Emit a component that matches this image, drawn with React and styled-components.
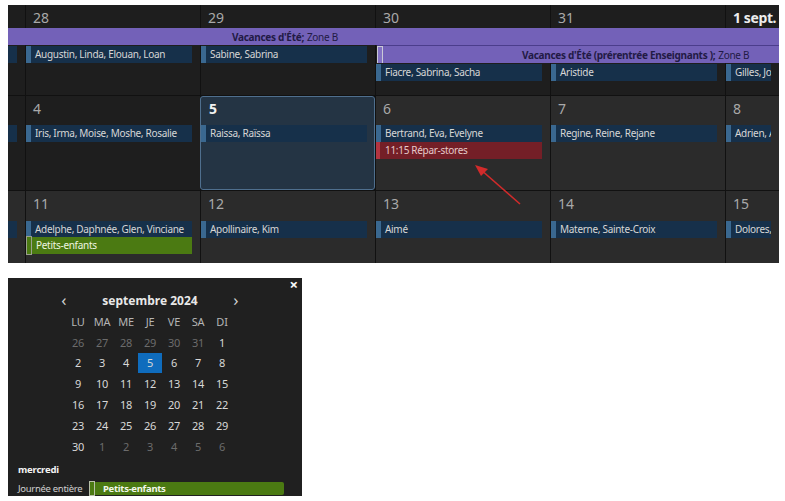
import React from "react";
import styled, { createGlobalStyle } from "styled-components";

const GlobalStyle = createGlobalStyle`
  body {
    margin: 0;
    background: #ffffff;
    font-family: "Noto Sans", "Open Sans", sans-serif;
  }
`;

const Page = styled.div`
  display: flex;
  flex-direction: column;
  align-items: flex-start;
  padding: 5px 0 0 8px;
`;

const Calendar = styled.div`
  position: relative;
  width: 771px;
  display: flex;
  flex-direction: column;
  background: #111;
`;

const Week = styled.div`
  display: grid;
  grid-template-columns: 17px repeat(4, 175px) 54px;
  grid-template-rows: ${(p) => p.$rows};
  height: ${(p) => p.$height}px;
  border-bottom: ${(p) => (p.$last ? "none" : "1px solid #111")};
  overflow: hidden;
`;

const Day = styled.div`
  grid-row: 1 / -1;
  grid-column: ${(p) => p.$col};
  background: ${(p) => (p.$past ? "#1e1e1e" : "#2b2b2b")};
  border-left: ${(p) => (p.$col === 1 ? "none" : "1px solid #111")};
  padding: ${(p) => p.$pad || "4px 0 0 7px"};
  font-size: 14px;
  letter-spacing: ${(p) => (p.$bold ? "-0.4px" : "0")};
  color: ${(p) => (p.$bold ? "#ececec" : "#a9a9a9")};
  font-weight: ${(p) => (p.$bold ? 700 : 400)};
  white-space: nowrap;
  overflow: hidden;
  line-height: 18px;
`;

const SelectedDay = styled(Day)`
  background: #243444;
  border: 1px solid #4f6f8e;
  border-radius: 3px;
  color: #f2f2f2;
  font-weight: 700;
`;

const Names = styled.div`
  grid-row: ${(p) => p.$row};
  grid-column: ${(p) => p.$col};
  margin: 1px 8px 0 ${(p) => (p.$cut ? 0 : 1)}px;
  background: #16304a;
  border-left: 5px solid ${(p) => (p.$cut ? "#16304a" : "#3a6890")};
  color: #d6d6d6;
  font-size: 10px;
  letter-spacing: -0.3px;
  line-height: 17px;
  height: 17px;
  padding-left: 4px;
  white-space: nowrap;
  overflow: hidden;
`;

const TimedEvent = styled.div`
  grid-row: ${(p) => p.$row};
  grid-column: ${(p) => p.$col};
  margin: 1px 8px 0 1px;
  background: #741f27;
  border-left: 4px solid #b23440;
  color: #e6caca;
  font-size: 10px;
  letter-spacing: -0.3px;
  line-height: 17px;
  height: 17px;
  padding-left: 5px;
  white-space: nowrap;
`;

const GreenEvent = styled.div`
  grid-row: ${(p) => p.$row};
  grid-column: ${(p) => p.$col};
  margin: 0 8px 0 1px;
  background: #4b7a12;
  color: #eef5e0;
  font-size: 10px;
  letter-spacing: -0.3px;
  line-height: 17px;
  height: 17px;
  display: flex;
  align-items: center;
  gap: 4px;
  white-space: nowrap;
`;

const Marker = styled.span`
  flex: none;
  width: 4px;
  height: ${(p) => p.$h || 15}px;
  border: 1px solid ${(p) => p.$color || "#9aa08e"};
  background: ${(p) => p.$fill || "transparent"};
`;

const Holiday = styled.div`
  grid-row: ${(p) => p.$row};
  grid-column: ${(p) => p.$col};
  margin-left: ${(p) => p.$ml || 0}px;
  background: #7361b8;
  border-top: ${(p) => (p.$top ? "1px solid #4b3d8c" : "none")};
  color: #221a45;
  font-size: 10px;
  letter-spacing: -0.3px;
  display: flex;
  align-items: center;
  white-space: nowrap;
  overflow: hidden;
  b {
    font-weight: 700;
    margin-right: 3px;
  }
`;

const HolidayText = styled.span`
  padding-left: ${(p) => p.$pl}px;
`;

const Arrow = styled.svg`
  position: absolute;
  left: 458px;
  top: 155px;
  pointer-events: none;
`;

/* mini month picker */

const Picker = styled.div`
  margin-top: 15px;
  width: 294px;
  height: 218px;
  background: #202020;
  color: #dadada;
  display: flex;
  flex-direction: column;
`;

const CloseRow = styled.div`
  display: flex;
  justify-content: flex-end;
  height: 12px;
  padding-right: 4px;
`;

const Close = styled.span`
  font-size: 15px;
  line-height: 12px;
  font-weight: 700;
  color: #fafafa;
`;

const MonthHeader = styled.div`
  display: flex;
  align-items: center;
  height: 20px;
  margin-left: 49px;
  width: 186px;
  justify-content: space-between;
  font-size: 12px;
`;

const NavBtn = styled.span`
  font-size: 17px;
  line-height: 20px;
  color: #d0d0d0;
  width: 14px;
  text-align: center;
`;

const MonthTitle = styled.span`
  font-weight: 700;
  color: #e8e8e8;
`;

const MonthGrid = styled.div`
  display: grid;
  grid-template-columns: repeat(7, 24px);
  grid-auto-rows: 20.8px;
  margin: 1px 0 0 58px;
  font-size: 11px;
  letter-spacing: -0.2px;
`;

const DayHead = styled.div`
  display: flex;
  align-items: center;
  justify-content: center;
  color: #b5b5b5;
`;

const MonthDay = styled.div`
  display: flex;
  align-items: center;
  justify-content: center;
  color: ${(p) => (p.$out ? "#6c6c6c" : "#d8d8d8")};
  background: ${(p) => (p.$sel ? "#0f6cbd" : "transparent")};
`;

const Agenda = styled.div`
  margin-top: 6px;
  padding-left: 10px;
  display: flex;
  flex-direction: column;
  gap: 6px;
`;

const AgendaDay = styled.div`
  font-size: 9.5px;
  font-weight: 700;
  color: #f4f4f4;
  letter-spacing: -0.2px;
`;

const AgendaRow = styled.div`
  display: flex;
  align-items: center;
  font-size: 9.5px;
  letter-spacing: -0.3px;
  color: #d0d0d0;
`;

const AgendaLabel = styled.span`
  width: 71px;
`;

const AgendaEvent = styled.div`
  width: 195px;
  height: 13px;
  background: #4b7a12;
  border-radius: 2px;
  display: flex;
  align-items: center;
  gap: 8px;
  font-weight: 700;
  color: #f2f7ea;
`;

const weeks = [
  {
    height: 90,
    rows: "23px 17px 18px 17px 1fr",
    days: [
      { label: "", past: true },
      { label: "28", past: true },
      { label: "29", past: true },
      { label: "30", past: true },
      { label: "31", past: true },
      { label: "1 sept.", past: true, bold: true },
    ],
  },
  {
    height: 94,
    rows: "28px 17px 18px 1fr",
    days: [
      { label: "", past: true },
      { label: "4", past: true },
      { label: "5", selected: true },
      { label: "6" },
      { label: "7" },
      { label: "8" },
    ],
  },
  {
    height: 72,
    rows: "29px 17px 18px 1fr",
    days: [
      { label: "" },
      { label: "11" },
      { label: "12" },
      { label: "13" },
      { label: "14" },
      { label: "15" },
    ],
  },
];

const monthDays = [
  [26, 27, 28, 29, 30, 31, 1],
  [2, 3, 4, 5, 6, 7, 8],
  [9, 10, 11, 12, 13, 14, 15],
  [16, 17, 18, 19, 20, 21, 22],
  [23, 24, 25, 26, 27, 28, 29],
  [30, 1, 2, 3, 4, 5, 6],
];

function DayCells({ days }) {
  return days.map((d, i) =>
    d.selected ? (
      <SelectedDay key={i} $col={i + 1} $pad="3px 0 0 8px">
        {d.label}
      </SelectedDay>
    ) : (
      <Day key={i} $col={i + 1} $past={d.past} $bold={d.bold}>
        {d.label}
      </Day>
    )
  );
}

export default function App() {
  return (
    <>
      <GlobalStyle />
      <Page>
        <Calendar>
          <Week $height={weeks[0].height} $rows={weeks[0].rows}>
            <DayCells days={weeks[0].days} />
            <Holiday $row={2} $col="1 / -1">
              <HolidayText $pl={224}>
                <b>Vacances d'Été;</b>Zone B
              </HolidayText>
            </Holiday>
            <Names $row={3} $col={1} $cut />
            <Names $row={3} $col={2}>Augustin, Linda, Elouan, Loan</Names>
            <Names $row={3} $col={3}>Sabine, Sabrina</Names>
            <Holiday $row={3} $col="4 / -1" $ml={2} $top>
              <Marker $h={16} $color="#c9c9d6" $fill="#8372c4" />
              <HolidayText $pl={139}>
                <b>Vacances d'Été (prérentrée Enseignants );</b>Zone B
              </HolidayText>
            </Holiday>
            <Names $row={4} $col={4}>Fiacre, Sabrina, Sacha</Names>
            <Names $row={4} $col={5}>Aristide</Names>
            <Names $row={4} $col={6}>Gilles, Josselin</Names>
          </Week>

          <Week $height={weeks[1].height} $rows={weeks[1].rows}>
            <DayCells days={weeks[1].days} />
            <Names $row={2} $col={1} $cut />
            <Names $row={2} $col={2}>Iris, Irma, Moise, Moshe, Rosalie</Names>
            <Names $row={2} $col={3}>Raissa, Raïssa</Names>
            <Names $row={2} $col={4}>Bertrand, Eva, Evelyne</Names>
            <TimedEvent $row={3} $col={4}>11:15 Répar-stores</TimedEvent>
            <Names $row={2} $col={5}>Regine, Reine, Rejane</Names>
            <Names $row={2} $col={6}>Adrien, Aude</Names>
          </Week>

          <Week $height={weeks[2].height} $rows={weeks[2].rows} $last>
            <DayCells days={weeks[2].days} />
            <Names $row={2} $col={1} $cut />
            <Names $row={2} $col={2}>Adelphe, Daphnée, Glen, Vinciane</Names>
            <GreenEvent $row={3} $col={2}>
              <Marker $h={17} />
              Petits-enfants
            </GreenEvent>
            <Names $row={2} $col={3}>Apollinaire, Kim</Names>
            <Names $row={2} $col={4}>Aimé</Names>
            <Names $row={2} $col={5}>Materne, Sainte-Croix</Names>
            <Names $row={2} $col={6}>Dolores, Inès</Names>
          </Week>

          <Arrow width="60" height="50" viewBox="0 0 60 50">
            <line x1="54" y1="44" x2="14" y2="9" stroke="#d22b2b" strokeWidth="1.6" />
            <polygon points="9,5 22,9 15,16" fill="#d22b2b" />
          </Arrow>
        </Calendar>

        <Picker>
          <CloseRow>
            <Close>×</Close>
          </CloseRow>
          <MonthHeader>
            <NavBtn>‹</NavBtn>
            <MonthTitle>septembre 2024</MonthTitle>
            <NavBtn>›</NavBtn>
          </MonthHeader>
          <MonthGrid>
            {["LU", "MA", "ME", "JE", "VE", "SA", "DI"].map((d) => (
              <DayHead key={d}>{d}</DayHead>
            ))}
            {monthDays.map((row, r) =>
              row.map((n, c) => {
                const out = (r === 0 && n > 20) || (r === 5 && n < 10);
                return (
                  <MonthDay key={`${r}-${c}`} $out={out} $sel={r === 1 && n === 5}>
                    {n}
                  </MonthDay>
                );
              })
            )}
          </MonthGrid>
          <Agenda>
            <AgendaDay>mercredi</AgendaDay>
            <AgendaRow>
              <AgendaLabel>Journée entière</AgendaLabel>
              <AgendaEvent>
                <Marker $h={13} $color="#b8c0a8" />
                Petits-enfants
              </AgendaEvent>
            </AgendaRow>
          </Agenda>
        </Picker>
      </Page>
    </>
  );
}
